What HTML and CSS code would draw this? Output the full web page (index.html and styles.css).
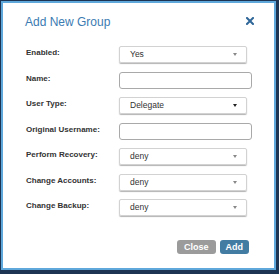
FILE: index.html
```html
<!DOCTYPE html>
<html lang="en">
<head>
  <meta charset="UTF-8" />
  <title>Add New Group</title>
  <link rel="stylesheet" href="styles.css">
</head>
<body>
  <div class="dialog">
    <div class="dialog-header">
      <h2 class="dialog-title">Add New Group</h2>
      <svg class="dialog-close" width="8" height="8" viewBox="0 0 8 8">
        <path d="M1 1 L7 7 M7 1 L1 7" stroke="#2f6799" stroke-width="2" stroke-linecap="square" />
      </svg>
    </div>

    <div class="form">
      <label class="form-label">Enabled:</label>
      <div class="select"><span>Yes</span></div>

      <label class="form-label">Name:</label>
      <input class="text-input" type="text" />

      <label class="form-label">User Type:</label>
      <div class="select select-dark"><span>Delegate</span></div>

      <label class="form-label">Original Username:</label>
      <input class="text-input" type="text" />

      <label class="form-label">Perform Recovery:</label>
      <div class="select"><span>deny</span></div>

      <label class="form-label">Change Accounts:</label>
      <div class="select"><span>deny</span></div>

      <label class="form-label">Change Backup:</label>
      <div class="select"><span>deny</span></div>
    </div>

    <div class="dialog-footer">
      <button class="btn btn-close">Close</button>
      <button class="btn btn-add">Add</button>
    </div>
  </div>
</body>
</html>
```

FILE: styles.css
```css
* {
  box-sizing: border-box;
}

html, body {
  margin: 0;
  padding: 0;
}

body {
  width: 279px;
  height: 274px;
  background: #1d3553;
  font-family: 'Liberation Sans', Arial, sans-serif;
  color: #333;
  overflow: hidden;
  padding: 1px 0 0 1px;
}

.dialog {
  width: 275px;
  height: 269px;
  background: #ffffff;
  border: 2px solid #5ea8dc;
}

.dialog-header {
  display: flex;
  align-items: center;
  justify-content: space-between;
  padding: 12px 20px 0 22px;
}

.dialog-title {
  margin: 0;
  font-size: 12px;
  line-height: 14px;
  font-weight: normal;
  color: #3b7bb2;
}

.dialog-close {
  display: block;
  margin-top: -3px;
}

.form {
  display: grid;
  grid-template-columns: 93px auto;
  row-gap: 8.5px;
  margin-top: 17px;
  padding-left: 23px;
}

.form-label {
  align-self: start;
  padding-top: 2px;
  font-size: 8px;
  line-height: 10px;
  font-weight: bold;
  color: #333;
}

.text-input {
  display: block;
  width: 133px;
  height: 17px;
  margin: 0;
  border: 1px solid #a9a9a9;
  border-radius: 3px;
  background: #fff;
}

.select {
  position: relative;
  width: 128px;
  height: 17px;
  padding-left: 10px;
  border: 1px solid #d2d2d2;
  border-radius: 2px;
  box-shadow: 0 1px 1px rgba(0, 0, 0, 0.3);
  font-size: 8.5px;
  line-height: 15px;
  color: #333;
}

.select::after {
  content: '';
  position: absolute;
  right: 9px;
  top: 6px;
  border-left: 2.5px solid transparent;
  border-right: 2.5px solid transparent;
  border-top: 3px solid #888;
}

.select-dark::after {
  border-top-color: #222;
}

.dialog-footer {
  display: flex;
  justify-content: flex-end;
  gap: 4px;
  margin-top: 24px;
  padding-right: 25px;
}

.btn {
  height: 14px;
  padding: 0 6px;
  border: none;
  border-radius: 3px;
  font-family: 'Liberation Sans', Arial, sans-serif;
  font-size: 9px;
  font-weight: bold;
  color: #fff;
}

.btn-close {
  background: #9b9b9b;
  padding: 0 7px;
}

.btn-add {
  background: #437ca3;
}
```
